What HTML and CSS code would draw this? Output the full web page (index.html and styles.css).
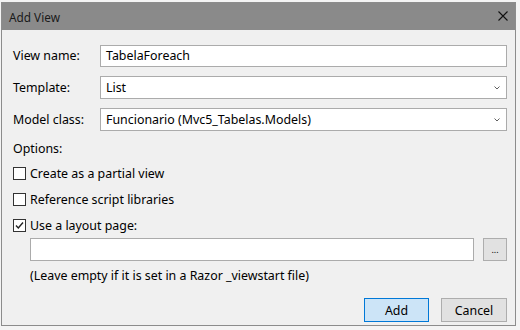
FILE: index.html
```html
<!DOCTYPE html>
<html lang="en">
  <head>
    <meta charset="UTF-8" />
    <title>Add View</title>
    <link rel="stylesheet" href="styles.css">
  </head>
  <body>
    <div class="dialog">
      <div class="titlebar">
        <span class="title">Add View</span>
        <svg class="close" width="10" height="10" viewBox="0 0 10 10">
          <path d="M0.5 0.5 L9.5 9.5 M9.5 0.5 L0.5 9.5" stroke="#111" stroke-width="1.1" fill="none" />
        </svg>
      </div>
      <div class="content">
        <div class="fields">
          <label class="field-label">View name:</label>
          <div class="textbox first">TabelaForeach</div>
          <label class="field-label">Template:</label>
          <div class="combo">
            <span>List</span>
            <svg class="chevron" width="6" height="4" viewBox="0 0 6 4"><path d="M0.5 0.5 L3 3 L5.5 0.5" stroke="#606060" fill="none" /></svg>
          </div>
          <label class="field-label">Model class:</label>
          <div class="combo">
            <span>Funcionario (Mvc5_Tabelas.Models)</span>
            <svg class="chevron" width="6" height="4" viewBox="0 0 6 4"><path d="M0.5 0.5 L3 3 L5.5 0.5" stroke="#606060" fill="none" /></svg>
          </div>
        </div>
        <div class="options-label">Options:</div>
        <div class="check"><span class="box"></span>Create as a partial view</div>
        <div class="check"><span class="box"></span>Reference script libraries</div>
        <div class="check">
          <span class="box">
            <svg width="11" height="11" viewBox="0 0 11 11"><path d="M2 5.5 L4.3 8 L9 2.5" stroke="#222" stroke-width="1.4" fill="none" /></svg>
          </span>Use a layout page:
        </div>
        <div class="layout-row">
          <div class="textbox wide"></div>
          <button type="button" class="btn browse">...</button>
        </div>
        <div class="hint">(Leave empty if it is set in a Razor _viewstart file)</div>
        <div class="actions">
          <button type="button" class="btn add">Add</button>
          <button type="button" class="btn cancel">Cancel</button>
        </div>
      </div>
    </div>
  </body>
</html>
```

FILE: styles.css
```css
:root {
  --face: #f0f0f0;
  --field-border: #ababab;
  --text: #000;
}
body {
  margin: 0;
  padding: 2px 3px 0 1px;
  background-color: #f4f4f4;
  font-family: "Noto Sans", "Open Sans", sans-serif;
  font-size: 12.4px;
  color: var(--text);
}
.dialog {
  width: 513px;
  border: 1px solid #8c8c8c;
  background-color: var(--face);
}
.titlebar {
  height: 27px;
  background-color: #8a8a8a;
  display: flex;
  align-items: center;
  justify-content: space-between;
  padding: 0 7px 0 7px;
}
.title {
  font-size: 11.8px;
  color: #1a1a1a;
}
.close {
  display: block;
  margin-top: -1px;
}
.content {
  padding: 15px 8px 3px 11px;
}
.fields {
  display: grid;
  grid-template-columns: 87px 1fr;
  row-gap: 9px;
  align-items: center;
}
.field-label {
  line-height: 16px;
}
.textbox,
.combo {
  height: 23px;
  box-sizing: border-box;
  border: 1px solid var(--field-border);
  background-color: #fff;
  padding: 0 5px;
  line-height: 21px;
}
.textbox.first {
  height: 22px;
  line-height: 20px;
}
.combo {
  display: flex;
  align-items: center;
  justify-content: space-between;
  padding-right: 6px;
}
.chevron {
  display: block;
}
.options-label {
  margin-top: 10px;
  line-height: 16px;
}
.check {
  display: flex;
  align-items: center;
  height: 17px;
  margin-top: 9px;
}
.options-label + .check {
  margin-top: 8px;
}
.box {
  width: 13px;
  height: 13px;
  box-sizing: border-box;
  border: 1px solid #333;
  background-color: #fff;
  margin-right: 4px;
  display: flex;
  align-items: center;
  justify-content: center;
}
.box svg {
  display: block;
}
.layout-row {
  display: flex;
  gap: 9px;
  margin: 4px 0 0 17px;
}
.textbox.wide {
  flex: 1;
}
.btn {
  box-sizing: border-box;
  height: 23px;
  border: 1px solid #adadad;
  background-color: #e1e1e1;
  font-family: "Noto Sans", "Open Sans", sans-serif;
  font-size: 12.4px;
  color: var(--text);
  padding: 0;
}
.browse {
  width: 24px;
  font-size: 9px;
  line-height: 1;
}
.hint {
  margin: 7px 0 0 17px;
  line-height: 16px;
}
.actions {
  display: flex;
  justify-content: flex-end;
  gap: 12px;
  margin-top: 14px;
}
.actions .btn {
  height: 24px;
}
.add {
  width: 65px;
  background-color: #cce4f7;
  border-color: #0078d7;
}
.cancel {
  width: 66px;
}
```
